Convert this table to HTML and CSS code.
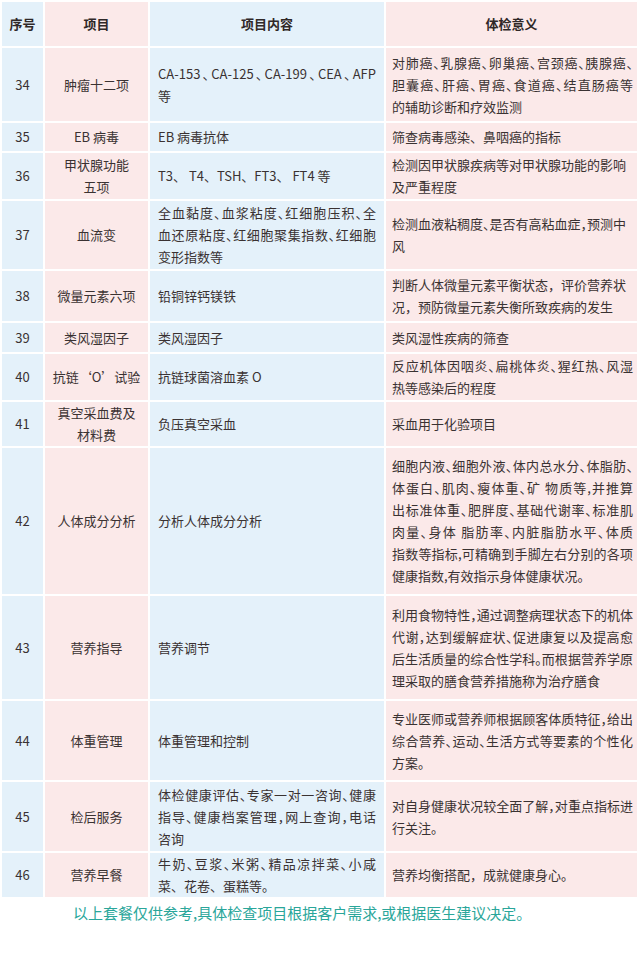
FILE: index.html
```html
<!DOCTYPE html>
<html lang="zh-CN">
<head>
<meta charset="utf-8">
<title>体检项目</title>
<link rel="stylesheet" href="styles.css">
</head>
<body>
<table class="grid">
  <colgroup>
    <col class="c1"><col class="c2"><col class="c3"><col class="c4">
  </colgroup>
  <thead>
    <tr class="rh">
      <th class="blue">序号</th>
      <th class="pink">项目</th>
      <th class="blue">项目内容</th>
      <th class="pink">体检意义</th>
    </tr>
  </thead>
  <tbody>
    <tr class="r34">
      <td class="blue no">34</td>
      <td class="pink name">肿瘤十二项</td>
      <td class="blue txt"><span class="ln j h">CA-153、CA-125、CA-199、CEA、AFP</span><span class="ln">等</span></td>
      <td class="pink mean"><span class="ln j h">对肺癌、乳腺癌、卵巢癌、宫颈癌、胰腺癌、</span><span class="ln j h">胆囊癌、肝癌、胃癌、食道癌、结直肠癌等</span><span class="ln">的辅助诊断和疗效监测</span></td>
    </tr>
    <tr class="r35">
      <td class="blue no">35</td>
      <td class="pink name">EB 病毒</td>
      <td class="blue txt">EB 病毒抗体</td>
      <td class="pink mean">筛查病毒感染、鼻咽癌的指标</td>
    </tr>
    <tr class="r36">
      <td class="blue no">36</td>
      <td class="pink name">甲状腺功能<br>五项</td>
      <td class="blue txt">T3、 T4、TSH、FT3、 FT4 等</td>
      <td class="pink mean"><span class="ln">检测因甲状腺疾病等对甲状腺功能的影响</span><span class="ln">及严重程度</span></td>
    </tr>
    <tr class="r37">
      <td class="blue no">37</td>
      <td class="pink name">血流变</td>
      <td class="blue txt"><span class="ln j h">全血黏度、血浆粘度、红细胞压积、全</span><span class="ln j h">血还原粘度、红细胞聚集指数、红细胞</span><span class="ln">变形指数等</span></td>
      <td class="pink mean"><span class="ln h">检测血液粘稠度、是否有高粘血症，预测中</span><span class="ln">风</span></td>
    </tr>
    <tr class="r38">
      <td class="blue no">38</td>
      <td class="pink name">微量元素六项</td>
      <td class="blue txt">铅铜锌钙镁铁</td>
      <td class="pink mean"><span class="ln">判断人体微量元素平衡状态，评价营养状</span><span class="ln">况，预防微量元素失衡所致疾病的发生</span></td>
    </tr>
    <tr class="r39">
      <td class="blue no">39</td>
      <td class="pink name">类风湿因子</td>
      <td class="blue txt">类风湿因子</td>
      <td class="pink mean">类风湿性疾病的筛查</td>
    </tr>
    <tr class="r40">
      <td class="blue no">40</td>
      <td class="pink name">抗链‘O’试验</td>
      <td class="blue txt">抗链球菌溶血素 O</td>
      <td class="pink mean"><span class="ln j h">反应机体因咽炎、扁桃体炎、猩红热、风湿</span><span class="ln">热等感染后的程度</span></td>
    </tr>
    <tr class="r41">
      <td class="blue no">41</td>
      <td class="pink name">真空采血费及<br>材料费</td>
      <td class="blue txt">负压真空采血</td>
      <td class="pink mean">采血用于化验项目</td>
    </tr>
    <tr class="r42">
      <td class="blue no">42</td>
      <td class="pink name">人体成分分析</td>
      <td class="blue txt">分析人体成分分析</td>
      <td class="pink mean"><span class="ln j h">细胞内液、细胞外液、体内总水分、体脂肪、</span><span class="ln j h">体蛋白、肌肉、瘦体重、矿 物质等,并推算</span><span class="ln j h">出标准体重、肥胖度、基础代谢率、标准肌</span><span class="ln j h">肉量、身体 脂肪率、内脏脂肪水平、体质</span><span class="ln j h">指数等指标,可精确到手脚左右分别的各项</span><span class="ln h">健康指数,有效指示身体健康状况。</span></td>
    </tr>
    <tr class="r43">
      <td class="blue no">43</td>
      <td class="pink name">营养指导</td>
      <td class="blue txt">营养调节</td>
      <td class="pink mean"><span class="ln j h">利用食物特性，通过调整病理状态下的机体</span><span class="ln j h">代谢，达到缓解症状、促进康复以及提高愈</span><span class="ln j h">后生活质量的综合性学科。而根据营养学原</span><span class="ln">理采取的膳食营养措施称为治疗膳食</span></td>
    </tr>
    <tr class="r44">
      <td class="blue no">44</td>
      <td class="pink name">体重管理</td>
      <td class="blue txt">体重管理和控制</td>
      <td class="pink mean"><span class="ln j h">专业医师或营养师根据顾客体质特征，给出</span><span class="ln j h">综合营养、运动、生活方式等要素的个性化</span><span class="ln">方案。</span></td>
    </tr>
    <tr class="r45">
      <td class="blue no">45</td>
      <td class="pink name">检后服务</td>
      <td class="blue txt"><span class="ln j h">体检健康评估、专家一对一咨询、健康</span><span class="ln j h">指导、健康档案管理，网上查询，电话</span><span class="ln">咨询</span></td>
      <td class="pink mean"><span class="ln j h">对自身健康状况较全面了解，对重点指标进</span><span class="ln h">行关注。</span></td>
    </tr>
    <tr class="r46">
      <td class="blue no">46</td>
      <td class="pink name">营养早餐</td>
      <td class="blue txt"><span class="ln j h">牛奶、豆浆、米粥、精品凉拌菜、小咸</span><span class="ln">菜、花卷、蛋糕等。</span></td>
      <td class="pink mean"><span class="ln">营养均衡搭配，成就健康身心。</span></td>
    </tr>
  </tbody>
</table>
<p class="note">以上套餐仅供参考,具体检查项目根据客户需求,或根据医生建议决定。</p>
</body>
</html>
```

FILE: styles.css
```css
html, body {
  margin: 0;
  padding: 0;
  background: #ffffff;
}

body {
  font-family: "Noto Sans CJK SC", "Noto Sans", sans-serif;
  font-size: 13px;
  color: #3a3232;
  width: 640px;
}

.grid {
  border-collapse: separate;
  border-spacing: 2px;
  table-layout: fixed;
  width: 639px;
}

.c1 { width: 41px; }
.c2 { width: 103px; }
.c3 { width: 234px; }
.c4 { width: 251px; }

.grid th,
.grid td {
  padding: 0;
  line-height: 22px;
  vertical-align: middle;
}

.grid th {
  font-weight: 700;
  color: #2f2828;
  text-align: center;
}

.blue { background: #e4f1fa; }
.pink { background: #fbe9e9; }

.no,
.name {
  text-align: center;
}

.txt {
  text-align: left;
  padding: 0 8px 0 8px !important;
}

.mean {
  text-align: left;
  padding: 0 4px 0 6px !important;
}

.ln {
  display: block;
  white-space: nowrap;
}

.j {
  text-align: justify;
  text-align-last: justify;
}

.h {
  font-feature-settings: "halt";
}

.rh { height: 44px; }
.r34 { height: 73px; }
.r35 { height: 28px; }
.r36 { height: 46px; }
.r37 { height: 68px; }
.r38 { height: 50px; }
.r39 { height: 29px; }
.r40 { height: 46px; }
.r41 { height: 44px; }
.r42 { height: 146px; }
.r43 { height: 103px; }
.r44 { height: 79px; }
.r45 { height: 69px; }
.r46 { height: 44px; }

.note {
  margin: 0;
  padding: 3px 0 0 73px;
  font-size: 15px;
  line-height: 22px;
  color: #2aa69a;
}
```
